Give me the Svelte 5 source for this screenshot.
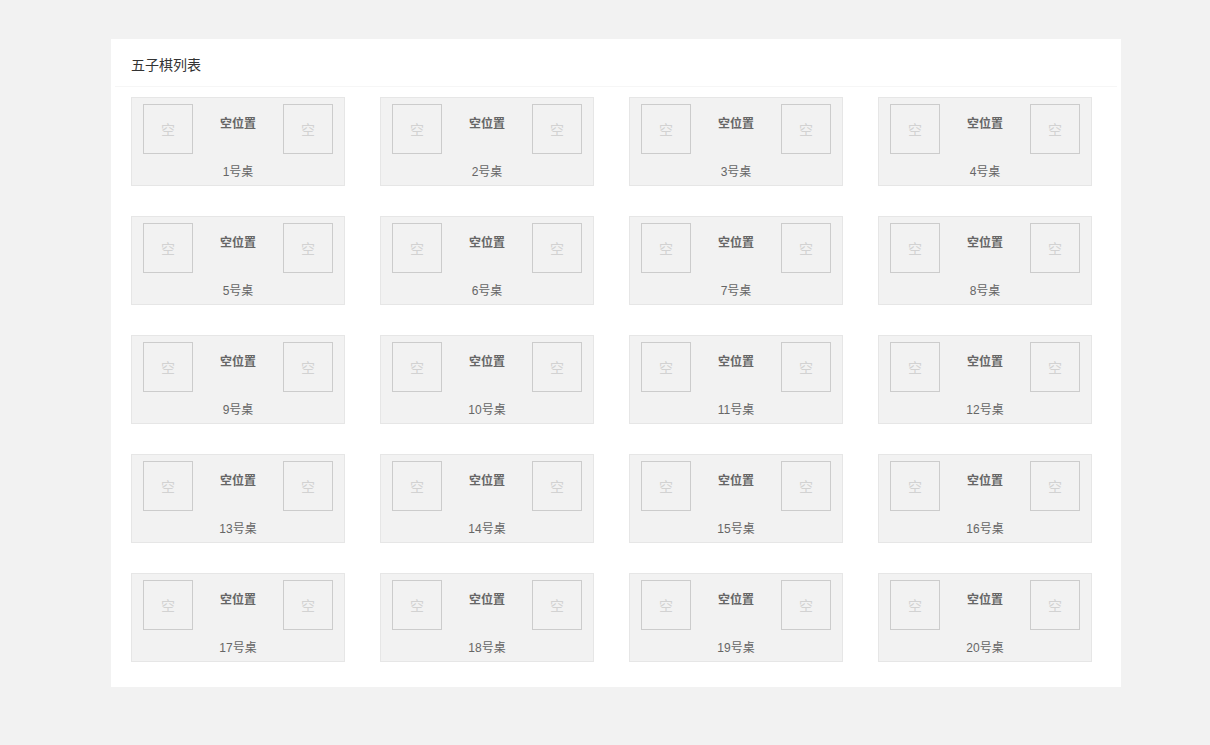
<script>
  const tables = Array.from({ length: 20 }, (_, i) => i + 1);
</script>

<main class="panel">
  <h1>五子棋列表</h1>
  <div class="grid">
    {#each tables as n (n)}
      <section class="table">
        <div class="seats">
          <button type="button" class="seat">空</button>
          <strong>空位置</strong>
          <button type="button" class="seat">空</button>
        </div>
        <p>{n}号桌</p>
      </section>
    {/each}
  </div>
</main>

<style>
  :global(body) {
    background: #f2f2f2;
    font-family: "Liberation Sans", "Noto Sans CJK SC", sans-serif;
    font-size: 12px;
    color: #666;
  }
  .panel {
    box-sizing: border-box;
    max-width: 1010px;
    margin: 39px 89px 0 111px;
    padding: 0 4px 25px;
    background: #fff;
  }
  h1 {
    margin: 0;
    padding: 16px 16px 10px;
    border-bottom: 1px solid #f6f6f6;
    font-size: 14px;
    line-height: 21px;
    font-weight: 400;
    color: #333;
  }
  .grid {
    display: grid;
    grid-template-columns: repeat(4, 1fr);
    gap: 30px 35px;
    padding: 10px 25px 0 16px;
  }
  .table {
    box-sizing: border-box;
    padding: 6px 11px 4px;
    border: 1px solid #e6e6e6;
    background: #f2f2f2;
    text-align: center;
  }
  .seats {
    display: flex;
    justify-content: space-between;
    align-items: flex-start;
  }
  .seats strong {
    padding-top: 11px;
    line-height: 18px;
  }
  .seat {
    box-sizing: border-box;
    width: 50px;
    height: 50px;
    padding: 0;
    border: 1px solid #ccc;
    background: transparent;
    color: #d2d2d2;
    font: inherit;
    font-size: 14px;
    cursor: pointer;
  }
  p {
    margin: 9px 0 0;
    line-height: 18px;
  }
</style>
